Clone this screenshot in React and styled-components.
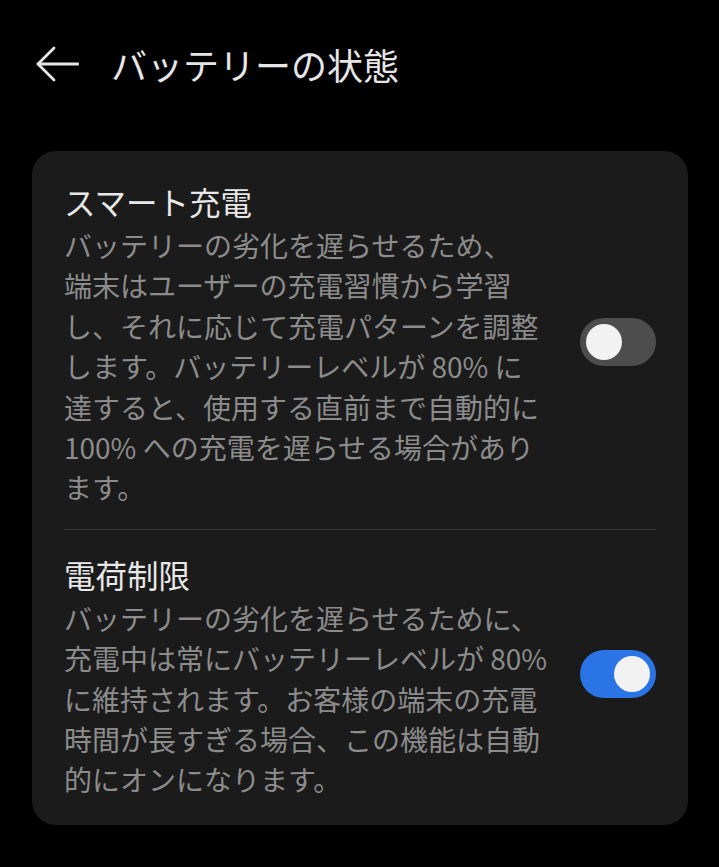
import React from 'react'
import styled, { createGlobalStyle } from 'styled-components'

const Global = createGlobalStyle`
  html, body {
    margin: 0;
    padding: 0;
    background: #000;
  }
  body {
    font-family: "Noto Sans CJK JP", "Noto Sans", sans-serif;
  }
`

const Page = styled.div`
  width: 719px;
  min-height: 867px;
  background: #000;
  box-sizing: border-box;
  padding: 0 31px 0 32px;
`

const Header = styled.header`
  height: 128px;
  display: flex;
  align-items: center;
  gap: 31px;
  padding-left: 2px;
`

const Back = styled.button`
  background: none;
  border: 0;
  padding: 0;
  width: 46px;
  height: 46px;
  display: flex;
  align-items: center;
  justify-content: center;
  color: #e6e6e6;
`

const Title = styled.h1`
  margin: 0;
  font-size: 36px;
  font-weight: 400;
  color: #e6e6e6;
`

const Card = styled.section`
  margin-top: 23px;
  background: #1b1b1b;
  border-radius: 24px;
  padding: 6px 32px 4px;
`

const Item = styled.div`
  display: flex;
  align-items: center;
  justify-content: space-between;
  padding: 23px 0 21px;
`

const Texts = styled.div`
  flex: 1;
`

const ItemTitle = styled.div`
  font-size: 31.5px;
  line-height: 42px;
  color: #e8e8e8;
`

const Desc = styled.div`
  margin-top: 3px;
  font-size: 28px;
  line-height: 40.4px;
  color: #8c8c8c;
`

const Divider = styled.div`
  height: 1px;
  background: #3a3a3a;
`

const Track = styled.div`
  width: 76px;
  height: 48px;
  border-radius: 24px;
  background: ${p => (p.$on ? '#2a74e6' : '#4d4d4d')};
  display: flex;
  align-items: center;
  justify-content: ${p => (p.$on ? 'flex-end' : 'flex-start')};
  padding: 0 6px;
  box-sizing: border-box;
  flex-shrink: 0;
  margin-top: -4px;
`

const Knob = styled.div`
  width: 36px;
  height: 36px;
  border-radius: 50%;
  background: #f2f2f2;
`

const Toggle = ({ on }) => (
  <Track $on={on}>
    <Knob />
  </Track>
)

const App = () => (
  <Page>
    <Global />
    <Header>
      <Back aria-label="戻る">
        <svg width="44" height="44" viewBox="0 0 44 44" fill="none" stroke="currentColor" strokeWidth="2.8" strokeLinecap="round" strokeLinejoin="round">
          <path d="M43 22H3" />
          <path d="M19 6L3 22l16 16" />
        </svg>
      </Back>
      <Title>バッテリーの状態</Title>
    </Header>
    <Card>
      <Item>
        <Texts>
          <ItemTitle>スマート充電</ItemTitle>
          <Desc>
            バッテリーの劣化を遅らせるため、<br />
            端末はユーザーの充電習慣から学習<br />
            し、それに応じて充電パターンを調整<br />
            します。バッテリーレベルが 80% に<br />
            達すると、使用する直前まで自動的に<br />
            100% への充電を遅らせる場合があり<br />
            ます。
          </Desc>
        </Texts>
        <Toggle on={false} />
      </Item>
      <Divider />
      <Item>
        <Texts>
          <ItemTitle>電荷制限</ItemTitle>
          <Desc>
            バッテリーの劣化を遅らせるために、<br />
            充電中は常にバッテリーレベルが 80%<br />
            に維持されます。お客様の端末の充電<br />
            時間が長すぎる場合、この機能は自動<br />
            的にオンになります。
          </Desc>
        </Texts>
        <Toggle on />
      </Item>
    </Card>
  </Page>
)

export default App
